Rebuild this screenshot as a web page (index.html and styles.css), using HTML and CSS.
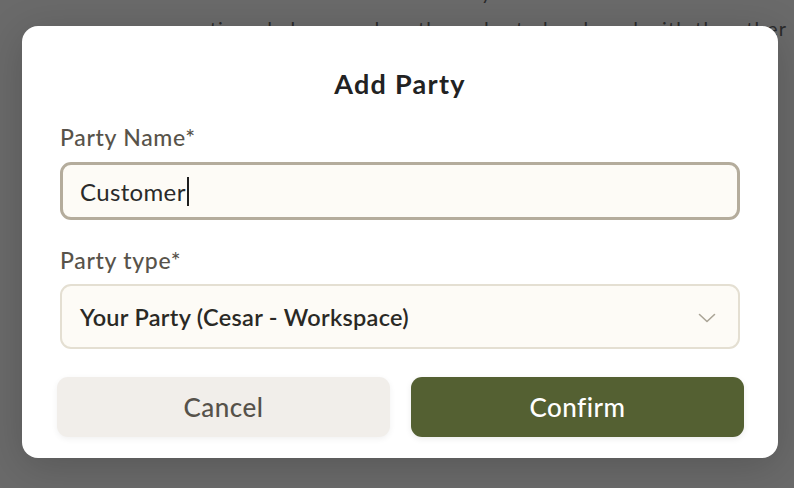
FILE: index.html
```html
<!DOCTYPE html>
<html lang="en">
<head>
<meta charset="utf-8">
<title>Add Party</title>
<link rel="stylesheet" href="styles.css">
</head>
<body>
<div class="page">
  <p class="bg-line bg-line-1">Add a new entity</p>
  <p class="bg-line bg-line-2">mentioned above and on the order to be shared with the other</p>
</div>
<div class="overlay">
  <div class="modal" role="dialog" aria-labelledby="modal-title">
    <h2 class="modal-title" id="modal-title">Add Party</h2>
    <label class="field-label" for="party-name">Party Name*</label>
    <div class="text-input"><span class="input-value">Customer</span><span class="caret"></span></div>
    <label class="field-label field-label-second">Party type*</label>
    <div class="select">
      <span class="select-value">Your Party (Cesar - Workspace)</span>
      <svg class="chevron" width="18" height="10" viewBox="0 0 18 10" aria-hidden="true"><path d="M1.5 1.5 L9 8.5 L16.5 1.5" fill="none" stroke="#aaa496" stroke-width="1.6" stroke-linecap="round" stroke-linejoin="round"/></svg>
    </div>
    <div class="actions">
      <button class="btn btn-cancel">Cancel</button>
      <button class="btn btn-confirm">Confirm</button>
    </div>
  </div>
</div>
</body>
</html>
```

FILE: styles.css
```css
* { box-sizing: border-box; }
html, body {
  margin: 0;
  padding: 0;
}
body {
  width: 794px;
  height: 488px;
  overflow: hidden;
  background: #6a6a6a;
  font-family: "Lato", "Noto Sans", sans-serif;
  position: relative;
}
.page {
  color: #2a2a2a;
  font-size: 20px;
  white-space: nowrap;
}
.bg-line {
  margin: 0;
  line-height: 36px;
}
.bg-line-1 {
  margin-top: -26px;
  padding-left: 342px;
}
.bg-line-2 {
  padding-left: 168px;
  letter-spacing: 1.2px;
}
.overlay {
  position: absolute;
  inset: 0;
}
.modal {
  position: absolute;
  left: 22px;
  top: 26px;
  width: 756px;
  height: 432px;
  background: #ffffff;
  border-radius: 16px;
  box-shadow: 0 8px 40px rgba(0,0,0,0.18);
  padding: 42px 38px 21px 38px;
  display: flex;
  flex-direction: column;
}
.modal-title {
  margin: 0 0 25px 0;
  text-align: center;
  font-size: 27px;
  line-height: 32px;
  font-weight: 700;
  letter-spacing: 1.3px;
  color: #222222;
}
.field-label {
  display: block;
  font-size: 23px;
  line-height: 24px;
  font-weight: 500;
  letter-spacing: 0.7px;
  color: #58534a;
  margin-bottom: 13px;
}
.field-label-second {
  margin-top: 28px;
  margin-bottom: 12px;
}
.text-input {
  height: 58px;
  border: 3px solid #b4ac9c;
  border-radius: 11px;
  background: #fdfbf6;
  display: flex;
  align-items: center;
  padding-left: 17px;
  font-size: 24px;
  letter-spacing: 0.35px;
  color: #2a2a2a;
}
.caret {
  display: inline-block;
  width: 2px;
  height: 29px;
  background: #1e1e1e;
  margin-left: 1px;
}
.select {
  height: 65px;
  border: 2px solid #e4dfd2;
  border-radius: 11px;
  background: #fdfbf6;
  display: flex;
  align-items: center;
  justify-content: space-between;
  padding: 0 22px 0 18px;
  font-size: 23.5px;
  font-weight: 600;
  letter-spacing: 0.3px;
  color: #2a2925;
}
.chevron {
  display: block;
  margin-top: 2px;
}
.actions {
  margin: 28px -4px 0 -3px;
  display: flex;
  gap: 21px;
}
.btn {
  flex: 1;
  height: 60px;
  border: none;
  border-radius: 11px;
  font-family: inherit;
  font-size: 26px;
  font-weight: 500;
  letter-spacing: 0.5px;
  cursor: pointer;
}
.btn-cancel {
  background: #f1eeea;
  color: #56524a;
  box-shadow: 0 2px 6px rgba(0,0,0,0.06);
}
.btn-confirm {
  background: #546032;
  color: #ffffff;
  box-shadow: 0 2px 6px rgba(0,0,0,0.08);
}
```
